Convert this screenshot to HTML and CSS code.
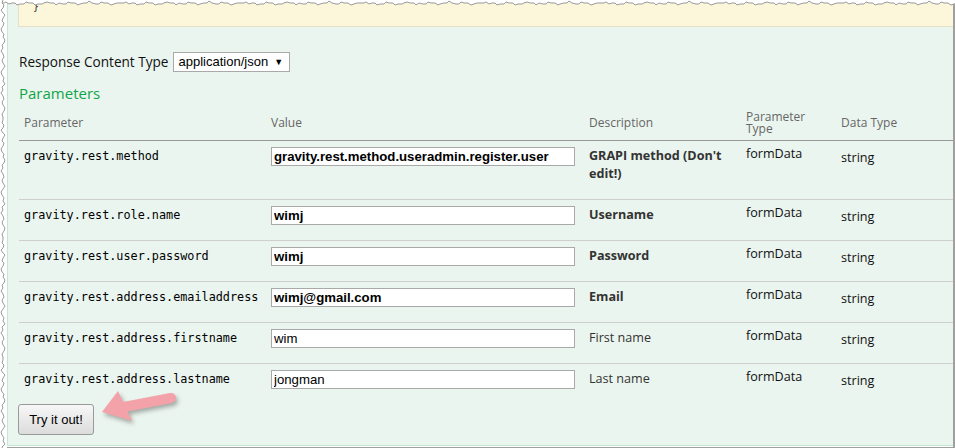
FILE: index.html
```html
<!DOCTYPE html>
<html>
<head>
<meta charset="utf-8">
<link rel="stylesheet" href="styles.css">
</head>
<body>
<div class="shot">
  <div class="frame">
    <div class="panel">
      <pre class="snippet">}</pre>
      <div class="rct">Response Content Type <span class="select">application/json <span class="caret">▼</span></span></div>
      <h4 class="params-title">Parameters</h4>
      <table class="params">
        <colgroup>
          <col class="c1"><col class="c2"><col class="c3"><col class="c4"><col class="c5">
        </colgroup>
        <thead>
          <tr>
            <th>Parameter</th>
            <th>Value</th>
            <th>Description</th>
            <th class="two">Parameter<br>Type</th>
            <th>Data Type</th>
          </tr>
        </thead>
        <tbody>
          <tr>
            <td class="code">gravity.rest.method</td>
            <td><input class="inp req" type="text" value="gravity.rest.method.useradmin.register.user"></td>
            <td class="desc req">GRAPI method (Don't edit!)</td>
            <td class="ptype">formData</td>
            <td class="dtype">string</td>
          </tr>
          <tr>
            <td class="code">gravity.rest.role.name</td>
            <td><input class="inp req" type="text" value="wimj"></td>
            <td class="desc req">Username</td>
            <td class="ptype">formData</td>
            <td class="dtype">string</td>
          </tr>
          <tr>
            <td class="code">gravity.rest.user.password</td>
            <td><input class="inp req" type="text" value="wimj"></td>
            <td class="desc req">Password</td>
            <td class="ptype">formData</td>
            <td class="dtype">string</td>
          </tr>
          <tr>
            <td class="code">gravity.rest.address.emailaddress</td>
            <td><input class="inp req" type="text" value="wimj@gmail.com"></td>
            <td class="desc req">Email</td>
            <td class="ptype">formData</td>
            <td class="dtype">string</td>
          </tr>
          <tr>
            <td class="code">gravity.rest.address.firstname</td>
            <td><input class="inp" type="text" value="wim"></td>
            <td class="desc">First name</td>
            <td class="ptype">formData</td>
            <td class="dtype">string</td>
          </tr>
          <tr>
            <td class="code">gravity.rest.address.lastname</td>
            <td><input class="inp" type="text" value="jongman"></td>
            <td class="desc">Last name</td>
            <td class="ptype">formData</td>
            <td class="dtype">string</td>
          </tr>
        </tbody>
      </table>
      <button class="try" type="button">Try it out!</button>
    </div>
  </div>

  <svg class="torn torn-top" width="955" height="9" viewBox="0 0 955 9">
    <defs>
      <pattern id="tt" width="120" height="9" patternUnits="userSpaceOnUse">
        <path d="M0,0 H120 V3 L117,3 114,4 111,5 108,3 104,3 101,2 99,4 96,4 92,3 89,1 87,3 84,3 80,4 78,5 75,3 71,3 68,2 66,4 63,4 59,3 56,5 54,3 50,3 47,2 44,3 42,4 38,4 35,5 33,3 29,3 26,2 24,4 20,4 17,5 15,3 12,3 9,4 6,2 4,3 0,3 Z" fill="#fff"/>
        <polyline points="0,3 4,3 6,2 9,4 12,3 15,3 17,5 20,4 24,4 26,2 29,3 33,3 35,5 38,4 42,4 44,3 47,2 50,3 54,3 56,5 59,3 63,4 66,4 68,2 71,3 75,3 78,5 80,4 84,3 87,3 89,1 92,3 96,4 99,4 101,2 104,3 108,3 111,5 114,4 117,3 120,3" fill="none" stroke="#9a9a9a" stroke-width="1"/>
      </pattern>
    </defs>
    <rect x="0" y="0" width="955" height="9" fill="url(#tt)"/>
  </svg>

  <svg class="torn torn-left" width="8" height="448" viewBox="0 0 8 448">
    <defs>
      <pattern id="tl" width="8" height="120" patternUnits="userSpaceOnUse">
        <path d="M0,0 H3 L2,3 4,5 3,8 1,10 3,13 5,15 3,18 2,21 4,23 3,26 1,29 2,32 4,34 3,37 5,40 4,43 2,45 3,48 1,51 3,54 4,57 2,60 3,63 5,66 3,69 1,72 2,75 4,78 3,81 5,84 2,87 3,90 1,93 3,96 4,99 2,102 3,105 5,108 4,111 2,114 3,117 3,120 H0 Z" fill="#fff"/>
        <polyline points="3,0 2,3 4,5 3,8 1,10 3,13 5,15 3,18 2,21 4,23 3,26 1,29 2,32 4,34 3,37 5,40 4,43 2,45 3,48 1,51 3,54 4,57 2,60 3,63 5,66 3,69 1,72 2,75 4,78 3,81 5,84 2,87 3,90 1,93 3,96 4,99 2,102 3,105 5,108 4,111 2,114 3,117 3,120" fill="none" stroke="#9a9a9a" stroke-width="1"/>
      </pattern>
    </defs>
    <rect x="0" y="0" width="8" height="448" fill="url(#tl)"/>
  </svg>

  <svg class="arrow" width="955" height="448" viewBox="0 0 955 448">
    <g class="arrow-shape">
      <line x1="171" y1="398" x2="124" y2="407" stroke="#f2a2a8" stroke-width="10" stroke-linecap="round"/>
      <polygon points="102,412 118,391 132,421" fill="#f2a2a8"/>
    </g>
  </svg>
</div>
</body>
</html>
```

FILE: styles.css
```css
* { box-sizing: border-box; }

html, body {
  margin: 0;
  padding: 0;
  background: #fff;
}

.shot {
  position: relative;
  width: 955px;
  height: 448px;
  overflow: hidden;
  font-family: "Open Sans", "Liberation Sans", sans-serif;
  color: #222;
}

.frame {
  margin-left: 7px;
  width: 948px;
  height: 448px;
  border-right: 2px solid #a0a0a0;
  border-bottom: 1px solid #a0a0a0;
  padding-bottom: 1px;
}

.panel {
  height: 446px;
  background: #ebf5ef;
  border-left: 1px solid #c3e8d1;
  border-bottom: 1px solid #c3e8d1;
  padding-left: 10px;
  overflow: hidden;
}

.snippet {
  margin: 0;
  height: 27px;
  background: #fcf6db;
  border-left: 1px solid #e5e0c6;
  border-bottom: 1px solid #e5e0c6;
  padding: 0 0 0 14px;
  font-family: "DejaVu Sans Mono", monospace;
  font-size: 10px;
  line-height: 14px;
  color: #333;
}

.rct {
  margin-top: 25px;
  padding-left: 1px;
  font-size: 13.6px;
  line-height: 20px;
  height: 20px;
  color: #111;
  display: flex;
  align-items: center;
  gap: 4px;
}

.select {
  display: inline-flex;
  align-items: center;
  height: 20px;
  padding: 0 6px 0 5px;
  border: 1px solid #a9a9a9;
  background: #fff;
  font-family: "Liberation Sans", Arial, sans-serif;
  font-size: 13px;
  color: #000;
  gap: 6px;
}

.caret {
  font-size: 9px;
}

.params-title {
  margin: 11px 0 3px 1px;
  font-size: 15px;
  line-height: 20px;
  font-weight: normal;
  color: #10a54a;
}

.params {
  margin-left: 1px;
  width: 934px;
  border-collapse: collapse;
  table-layout: fixed;
}

.c1 { width: 247px; }
.c2 { width: 318px; }
.c3 { width: 157px; }
.c4 { width: 95px; }
.c5 { width: 117px; }

.params th {
  text-align: left;
  font-weight: normal;
  color: #666;
  font-size: 12px;
  line-height: 12px;
  padding: 5px 5px;
  vertical-align: middle;
  border-bottom: 1px solid #999;
}

.params td {
  vertical-align: top;
  padding: 6px 5px 15px;
  font-size: 12.6px;
  line-height: 18px;
}

.params tbody tr + tr td {
  border-top: 1px solid #cfcfcf;
}

.params td.code {
  font-family: "DejaVu Sans Mono", monospace;
  font-size: 11.8px;
  color: #000;
  padding-bottom: 10px;
}

.inp {
  display: block;
  width: 304px;
  height: 19px;
  margin: 0;
  padding: 0 2px;
  border: 1px solid #a9a9a9;
  background: #fff;
  font-family: "Liberation Sans", Arial, sans-serif;
  font-size: 13.2px;
  color: #000;
  outline: none;
}

.inp.req { font-weight: bold; }

.params td.desc {
  color: #333;
  padding-bottom: 16px;
}
.desc.req { font-weight: bold; }

.params td.ptype {
  padding-top: 4px;
  padding-bottom: 10px;
  color: #111;
}

.params td.dtype {
  padding-top: 8px;
  padding-bottom: 10px;
  color: #111;
}

.try {
  display: block;
  margin: 0;
  width: 76px;
  height: 31px;
  border: 1px solid #9a9a9a;
  border-radius: 3px;
  background: linear-gradient(#f7f7f7, #dcdcdc);
  font-family: "Liberation Sans", Arial, sans-serif;
  font-size: 13px;
  color: #000;
  padding: 0;
}

.torn {
  position: absolute;
  left: 0;
  top: 0;
}

.arrow {
  position: absolute;
  left: 0;
  top: 0;
  pointer-events: none;
}

.arrow-shape {
  filter: drop-shadow(2px 3px 2px rgba(0, 0, 0, 0.3));
}
```
